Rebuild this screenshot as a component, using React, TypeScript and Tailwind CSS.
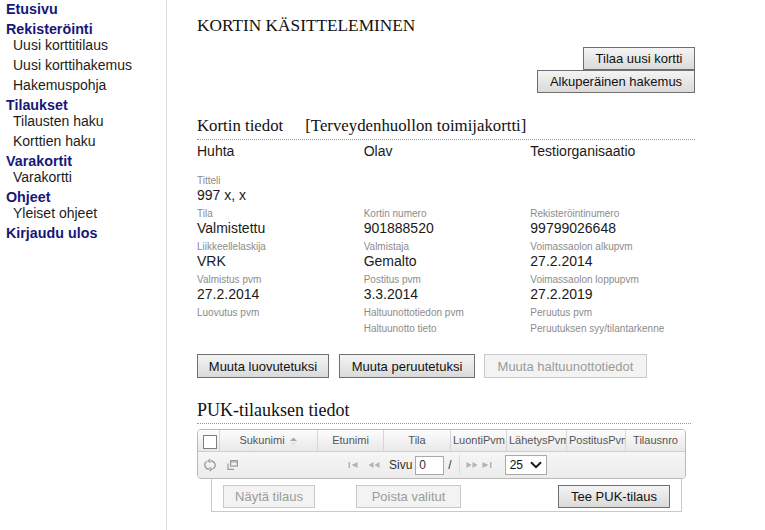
import React from "react";

const nav: { h: string; items: string[] }[] = [
  { h: "Etusivu", items: [] },
  { h: "Rekisteröinti", items: ["Uusi korttitilaus", "Uusi korttihakemus", "Hakemuspohja"] },
  { h: "Tilaukset", items: ["Tilausten haku", "Korttien haku"] },
  { h: "Varakortit", items: ["Varakortti"] },
  { h: "Ohjeet", items: ["Yleiset ohjeet"] },
  { h: "Kirjaudu ulos", items: [] },
];

function Btn({
  children,
  disabled,
  className = "",
}: {
  children: React.ReactNode;
  disabled?: boolean;
  className?: string;
}) {
  return (
    <button
      type="button"
      className={`flex items-center justify-center border text-[13px] leading-none whitespace-nowrap ${
        disabled
          ? "border-[#c9c9c9] bg-[#f3f3f3] text-[#9b9b9b]"
          : "border-[#6f6f6f] bg-gradient-to-b from-[#f4f4f4] to-[#dadada] text-[#111]"
      } ${className}`}
    >
      {children}
    </button>
  );
}

function Field({ label, value }: { label: string; value?: string }) {
  return (
    <div>
      <div className="text-[10px] leading-[16px] text-[#8c8c8c]">{label}</div>
      <div className="-mt-[2px] pb-[2px] text-[14px] leading-[17px] text-[#1a1a1a]">{value}</div>
    </div>
  );
}

function SortIcon() {
  return (
    <svg width="9" height="11" viewBox="0 0 9 11" className="ml-[4px] inline-block align-middle">
      <path d="M1 5 L4.5 1.5 L8 5 Z" fill="#a8a8a8" />
      <path d="M1 6.5 L4.5 10 L8 6.5 Z" fill="#e2e2e2" />
    </svg>
  );
}

function RefreshIcon() {
  return (
    <svg width="12" height="14" viewBox="0 0 12 14" fill="none" stroke="#9a9a9a" strokeWidth="1.3">
      <path d="M3 3.2 A4.3 4.3 0 0 0 5.5 11.2" />
      <path d="M9 10.8 A4.3 4.3 0 0 0 6.5 2.8" />
      <path d="M6.3 0.9 L4.3 2.9 L6.5 4.6" />
      <path d="M5.7 13.1 L7.7 11.1 L5.5 9.4" />
    </svg>
  );
}

function NewWinIcon() {
  return (
    <svg width="11" height="10" viewBox="0 0 11 10" fill="none" stroke="#9a9a9a" strokeWidth="1.2">
      <rect x="3.6" y="0.6" width="6.8" height="5.4" />
      <line x1="3.6" y1="2" x2="10.4" y2="2" />
      <path d="M1 3.5 L1 9.4 L7 9.4" />
    </svg>
  );
}

function FirstIcon() {
  return (
    <svg width="10" height="8" viewBox="0 0 10 8" fill="#b3b3b3">
      <rect x="0.5" y="1" width="1.5" height="6" />
      <path d="M9.5 1 L3.5 4 L9.5 7 Z" />
    </svg>
  );
}
function PrevIcon() {
  return (
    <svg width="12" height="8" viewBox="0 0 12 8" fill="#b3b3b3">
      <path d="M5.5 1 L0.5 4 L5.5 7 Z" />
      <path d="M11.5 1 L6.5 4 L11.5 7 Z" />
    </svg>
  );
}
function NextIcon() {
  return (
    <svg width="12" height="8" viewBox="0 0 12 8" fill="#b3b3b3">
      <path d="M0.5 1 L5.5 4 L0.5 7 Z" />
      <path d="M6.5 1 L11.5 4 L6.5 7 Z" />
    </svg>
  );
}
function LastIcon() {
  return (
    <svg width="10" height="8" viewBox="0 0 10 8" fill="#b3b3b3">
      <path d="M0.5 1 L6.5 4 L0.5 7 Z" />
      <rect x="8" y="1" width="1.5" height="6" />
    </svg>
  );
}

const cols: { t: React.ReactNode; w: string }[] = [
  {
    t: (
      <>
        Sukunimi
        <SortIcon />
      </>
    ),
    w: "w-[98px]",
  },
  { t: "Etunimi", w: "w-[66px]" },
  { t: "Tila", w: "w-[67px]" },
  { t: "LuontiPvm", w: "w-[56px]" },
  { t: "LähetysPvm", w: "w-[60px]" },
  { t: "PostitusPvm", w: "w-[59px]" },
  { t: "Tilausnro", w: "w-[59px]" },
];

export default function App() {
  return (
    <div className="flex min-h-[530px] bg-white font-['Liberation_Sans',Arial,sans-serif] text-[#111]">
      {/* Sidebar */}
      <div className="w-[167px] shrink-0 border-r border-[#dedede] pt-[1px]">
        <div className="flex flex-col gap-[4px]">
          {nav.map((s) => (
            <div key={s.h}>
              <div className="pl-[6px] text-[14.3px] font-bold leading-[16px] text-[#17177a]">{s.h}</div>
              {s.items.length > 0 && (
                <div className="flex flex-col gap-[4px]">
                  {s.items.map((i) => (
                    <div key={i} className="pl-[13px] text-[14px] leading-[16px] text-[#1c1c1c]">
                      {i}
                    </div>
                  ))}
                </div>
              )}
            </div>
          ))}
        </div>
      </div>

      {/* Main */}
      <div className="pl-[30px] pt-[15px]">
        <div className="w-[500px]">
          <div className="font-['Liberation_Serif','Times_New_Roman',serif] text-[17.3px] leading-[22px] text-[#111]">
            KORTIN KÄSITTELEMINEN
          </div>

          <div className="mt-[10px] flex flex-col items-end pr-[2px]">
            <Btn className="h-[23px] w-[112px]">Tilaa uusi kortti</Btn>
            <Btn className="h-[23px] w-[158px]">Alkuperäinen hakemus</Btn>
          </div>

          <div className="mt-[22px] w-[498px] border-b border-dotted border-[#9a9a9a] pb-[2px] font-['Liberation_Serif','Times_New_Roman',serif] text-[16.8px] leading-[22px] text-[#111]">
            Kortin tiedot<span className="ml-[22px]">[Terveydenhuollon toimijakortti]</span>
          </div>

          <div className="mt-[1px] mb-[12px] grid grid-cols-3 text-[14px] leading-[20px] text-[#1a1a1a]">
            <div>Huhta</div>
            <div>Olav</div>
            <div>Testiorganisaatio</div>
          </div>

          <div className="grid grid-cols-3">
            <div>
              <Field label="Titteli" value="997 x, x" />
            </div>
            <div />
            <div />

            <Field label="Tila" value="Valmistettu" />
            <Field label="Kortin numero" value="901888520" />
            <Field label="Rekisteröintinumero" value="99799026648" />

            <Field label="Liikkeellelaskija" value="VRK" />
            <Field label="Valmistaja" value="Gemalto" />
            <Field label="Voimassaolon alkupvm" value="27.2.2014" />

            <Field label="Valmistus pvm" value="27.2.2014" />
            <Field label="Postitus pvm" value="3.3.2014" />
            <Field label="Voimassaolon loppupvm" value="27.2.2019" />

            <div>
              <Field label="Luovutus pvm" />
            </div>
            <div>
              <Field label="Haltuunottotiedon pvm" />
              <Field label="Haltuunotto tieto" />
            </div>
            <div>
              <Field label="Peruutus pvm" />
              <Field label="Peruutuksen syy/tilantarkenne" />
            </div>
          </div>

          <div className="mt-[17px] flex">
            <Btn className="h-[24px] w-[132px]">Muuta luovutetuksi</Btn>
            <Btn className="ml-[10px] h-[24px] w-[136px]">Muuta peruutetuksi</Btn>
            <Btn disabled className="ml-[9px] h-[24px] w-[163px]">
              Muuta haltuunottotiedot
            </Btn>
          </div>

          <div className="mt-[21px] w-[494px] border-b border-dotted border-[#9a9a9a] pb-[2px] font-['Liberation_Serif','Times_New_Roman',serif] text-[18px] leading-[22px] text-[#111]">
            PUK-tilauksen tiedot
          </div>

          {/* Grid */}
          <div className="mt-[5px] w-[489px] overflow-hidden rounded-[4px] border border-[#b9b9b9]">
            <div className="flex h-[22px] border-b border-[#cfcfcf] bg-gradient-to-b from-[#fdfdfd] to-[#e8e8e8] text-[11px] text-[#555]">
              <div className="flex w-[22px] shrink-0 items-center border-r border-[#d6d6d6] pl-[5px] pt-[2px]">
                <div className="h-[14px] w-[14px] border border-[#7d7d7d] bg-white" />
              </div>
              {cols.map((c, i) => (
                <div
                  key={i}
                  className={`shrink-0 overflow-hidden whitespace-nowrap px-[2px] text-center leading-[21px] ${c.w} ${
                    i < cols.length - 1 ? "border-r border-[#d6d6d6]" : ""
                  }`}
                >
                  {c.t}
                </div>
              ))}
            </div>
            <div className="flex h-[26px] items-center bg-gradient-to-b from-[#f6f6f6] to-[#ececec] text-[12px] text-[#333]">
              <div className="ml-[6px] flex items-center">
                <RefreshIcon />
              </div>
              <div className="ml-[11px] flex items-center">
                <NewWinIcon />
              </div>
              <div className="ml-[110px] flex items-center">
                <FirstIcon />
              </div>
              <div className="ml-[10px] flex items-center">
                <PrevIcon />
              </div>
              <span className="ml-[9px]">Sivu</span>
              <div className="ml-[3px] flex h-[19px] w-[29px] items-center border border-[#a9a9a9] bg-white pl-[3px] text-[12px]">
                0
              </div>
              <span className="ml-[4px]">/</span>
              <div className="ml-[7px] h-[20px] w-px bg-[#dcdcdc]" />
              <div className="ml-[6px] flex items-center">
                <NextIcon />
              </div>
              <div className="ml-[4px] flex items-center">
                <LastIcon />
              </div>
              <div className="ml-[13px] flex h-[20px] w-[42px] items-center justify-between border border-[#a9a9a9] bg-white pl-[4px] pr-[4px] text-[12px] text-[#111]">
                <span>25</span>
                <svg width="12" height="8" viewBox="0 0 12 8" fill="none" stroke="#1a1a1a" strokeWidth="2">
                  <path d="M1 1.2 L6 6.2 L11 1.2" />
                </svg>
              </div>
            </div>
          </div>

          <div className="ml-[14px] flex w-[471px] border border-t-0 border-[#c9c9c9] pb-[3px] pl-[11px] pr-[11px] pt-[6px]">
            <Btn disabled className="h-[23px] w-[92px]">
              Näytä tilaus
            </Btn>
            <Btn disabled className="ml-[41px] h-[23px] w-[105px]">
              Poista valitut
            </Btn>
            <Btn className="ml-auto h-[23px] w-[112px]">Tee PUK-tilaus</Btn>
          </div>
        </div>
      </div>
    </div>
  );
}
